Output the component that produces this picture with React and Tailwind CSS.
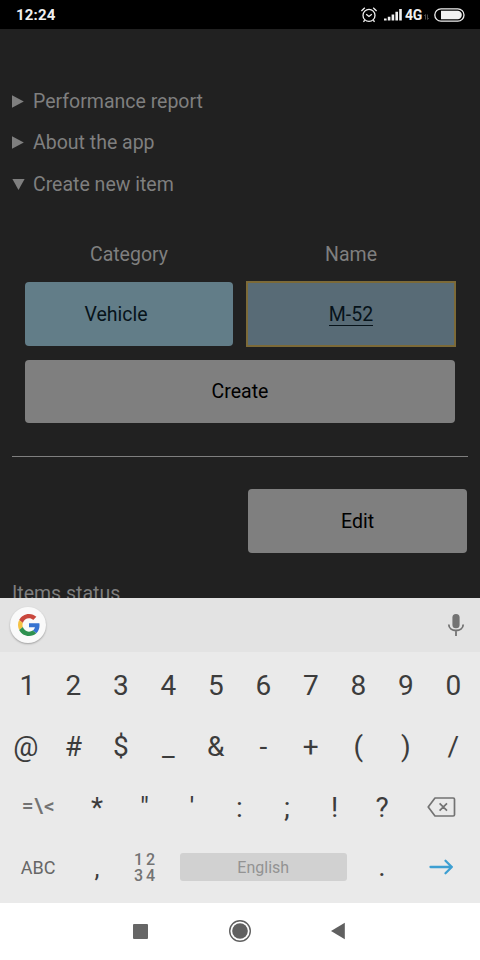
import React from "react";

const digits = ["1", "2", "3", "4", "5", "6", "7", "8", "9", "0"];
const symbols = ["@", "#", "$", "_", "&", "-", "+", "(", ")", "/"];
const punctuation = ["*", '"', "'", ":", ";", "!", "?"];

function StatusBar() {
  return (
    <header className="flex h-[29px] shrink-0 items-center justify-between bg-black pl-4 pr-[15px] text-[#f0f0f0]">
      <span className="pt-[2px] text-[15px] font-bold leading-none tracking-[0.2px]">12:24</span>
      <div className="flex items-center">
        <svg width="18" height="18" viewBox="0 0 18 18" fill="none" stroke="currentColor" strokeWidth="1.3" className="mr-[6px]">
          <circle cx="9" cy="9.4" r="6" />
          <path d="M1.4 5 4.8 1.8M16.6 5 13.2 1.8M4.8 14.2l-1.4 1.6M13.2 14.2l1.4 1.6M6.2 8.2 9 10.4l2.8-2.1" />
        </svg>
        <svg width="18" height="13" viewBox="0 0 18 13" fill="currentColor" className="mr-[3px]">
          <path d="M0 10.4h2.6v2.1H0zM3.8 8.8h2.6v3.7H3.8zM7.6 6.5h2.6v6H7.6zM11.4 3.8H14v8.7h-2.6zM15.2 1h2.6v11.5h-2.6z" />
        </svg>
        <span className="w-[19px] pt-px text-[14px] font-bold leading-none tracking-[-0.3px]">4G</span>
        <svg width="5" height="6" viewBox="0 0 5 6" fill="none" stroke="#4a4a4a" strokeWidth="1" className="mr-[5px] mt-1">
          <path d="M1.5 5.5v-5L.2 2M3.5.5v5L4.8 4" />
        </svg>
        <svg width="31" height="14" viewBox="0 0 31 14">
          <rect x=".8" y=".8" width="29.2" height="12.4" rx="6.2" fill="none" stroke="currentColor" strokeWidth="1.3" />
          <path d="M7 2.8h16.6a4.2 4.2 0 0 1 0 8.4H7z" fill="currentColor" />
        </svg>
      </div>
    </header>
  );
}

function Summary({ open, children }) {
  return (
    <div className="flex h-[41.5px] items-center">
      <svg width="13" height="14" viewBox="0 0 13 14" fill="#7f7f7f" className="mr-2">
        <path d={open ? "M.4 1h12.2L6.5 12z" : "M0 .2v12.6l11.8-6.3z"} />
      </svg>
      <span>{children}</span>
    </div>
  );
}

function Key({ children }) {
  return <div className="flex w-[47.5px] items-center justify-center text-[28px] leading-none">{children}</div>;
}

function Keyboard() {
  return (
    <section className="flex h-[305px] shrink-0 flex-col bg-[#eaeaea] text-[#3c3c3c]">
      <div className="flex h-[54px] items-center justify-between bg-[#e3e3e3] pb-px pl-[10px] pr-[15px]">
        <div className="flex size-9 items-center justify-center rounded-full bg-[#fafafa] pl-px shadow-[0_1px_2px_rgba(0,0,0,0.3)]">
          <svg width="22" height="22" viewBox="0 0 48 48">
            <path fill="#c9473d" d="M24 9.5c3.54 0 6.71 1.22 9.21 3.6l6.85-6.85C35.9 2.38 30.47 0 24 0 14.62 0 6.51 5.38 2.56 13.22l7.98 6.19C12.43 13.72 17.74 9.5 24 9.5z" />
            <path fill="#3673d1" d="M46.98 24.55c0-1.57-.15-3.09-.38-4.55H24v9.02h12.94c-.58 2.96-2.26 5.48-4.78 7.18l7.73 6c4.51-4.18 7.09-10.36 7.09-17.65z" />
            <path fill="#f5c243" d="M10.53 28.59c-.48-1.45-.76-2.99-.76-4.59s.27-3.14.76-4.59l-7.98-6.19C.92 16.46 0 20.12 0 24c0 3.88.92 7.54 2.56 10.78l7.97-6.19z" />
            <path fill="#2e9150" d="M24 48c6.48 0 11.93-2.13 15.89-5.81l-7.73-6c-2.15 1.45-4.92 2.3-8.16 2.3-6.26 0-11.57-4.22-13.47-9.91l-7.98 6.19C6.51 42.62 14.62 48 24 48z" />
          </svg>
        </div>
        <svg width="18" height="24" viewBox="0 0 18 24" fill="none" stroke="#737373" strokeWidth="1.8">
          <rect x="5.4" y="1" width="7.2" height="14.2" rx="3.5" fill="#737373" stroke="none" />
          <path d="M1.8 11.5c0 8 14.4 8 14.4 0M9 17.5V23" />
        </svg>
      </div>
      <div className="flex flex-col pl-[2px] pt-[3px]">
        <div className="flex h-[61px]">
          {digits.map((d) => <Key key={d}>{d === "1" ? <span className="pl-[3px]">1</span> : d}</Key>)}
        </div>
        <div className="flex h-[61px]">
          {symbols.map((s) => <Key key={s}>{s}</Key>)}
        </div>
        <div className="flex h-[60px]">
          <div className="flex w-[71.25px] items-center justify-center pl-[2px] text-[21px] font-medium tracking-[0.9px] text-[#737373]">=\&lt;</div>
          {punctuation.map((p) => <Key key={p}><span className="pt-[2px]">{p}</span></Key>)}
          <div className="flex w-[71.25px] items-center justify-center">
            <svg width="29" height="20" viewBox="0 0 29 20" fill="none" stroke="#737373" strokeWidth="1.7" strokeLinejoin="round">
              <path d="M8 1h18.2q1.3 0 1.3 1.3v15.4q0 1.3-1.3 1.3H8L1.2 10zM12.6 6.3l7.4 7.4M20 6.3l-7.4 7.4" />
            </svg>
          </div>
        </div>
        <div className="flex h-[60px]">
          <div className="flex w-[71.25px] items-center justify-center pl-px text-[18px] text-[#666]">ABC</div>
          <Key><span className="pt-[2px] text-[25px]">,</span></Key>
          <div className="flex w-[47.5px] flex-col items-center justify-center pt-[2px] text-[16px] font-medium leading-[16px] tracking-[3px] text-[#737373]">
            <span className="pl-[3px]">12</span>
            <span className="pl-[3px]">34</span>
          </div>
          <div className="flex w-[190px] items-center justify-center">
            <div className="flex h-7 w-[167px] items-center justify-center rounded-[3px] bg-[#d1d1d1] pt-[2px] text-[16px] text-[#939393]">English</div>
          </div>
          <Key>.</Key>
          <div className="flex w-[71.25px] items-center justify-center">
            <svg width="25" height="16" viewBox="0 0 25 16" fill="none" stroke="#3d9fd2" strokeWidth="2.3" strokeLinecap="round" strokeLinejoin="round">
              <path d="M1.5 8h21.3M16.5 1.8 22.8 8l-6.3 6.2" />
            </svg>
          </div>
        </div>
      </div>
    </section>
  );
}

function NavigationBar() {
  return (
    <nav className="flex h-[57px] shrink-0 items-center justify-between bg-white pb-px pl-[133px] pr-[134px] text-[#606060]">
      <div className="size-[15px] rounded-[1px] bg-[#666]" />
      <svg width="24" height="24" viewBox="0 0 24 24">
        <circle cx="12" cy="12" r="10.3" fill="none" stroke="currentColor" strokeWidth="1.4" />
        <circle cx="12" cy="12" r="7.8" fill="currentColor" />
      </svg>
      <svg width="15" height="18" viewBox="0 0 15 18" fill="currentColor">
        <path d="M13.8 .8v16.4L0 9z" />
      </svg>
    </nav>
  );
}

export default function App() {
  return (
    <div className="flex h-[960px] w-[480px] flex-col overflow-hidden bg-white font-['Roboto','Liberation_Sans',sans-serif]">
      <StatusBar />
      <main className="h-[569px] shrink-0 overflow-hidden bg-[#212121] px-3 pt-[52px] text-[19.5px] leading-6 text-[#7f7f7f]">
        <Summary>Performance report</Summary>
        <Summary>About the app</Summary>
        <Summary open>Create new item</Summary>
        <div className="mt-[37px] grid grid-cols-2 gap-x-[14px] px-[13px] text-center">
          <span>Category</span>
          <span>Name</span>
          <div className="mt-[15px] flex h-16 items-center justify-center rounded bg-[#627d88] pr-[26px] pt-[2px] text-[#07131a]">Vehicle</div>
          <div className="mt-[15px] flex h-16 items-center justify-center bg-[#586b76] pt-[2px] text-[#07131a] outline-2 -outline-offset-1 outline-[#7c6a38]">
            <span className="border-b border-[#07131a] pt-px leading-[21px]">M-52</span>
          </div>
          <div className="col-span-2 mt-[14px] flex h-[63px] items-center justify-center rounded bg-[#7f7f7f] pt-[2px] text-black">Create</div>
        </div>
        <hr className="mt-[33px] border-[#7f7f7f]" />
        <div className="mt-8 flex justify-end pr-px">
          <div className="flex h-16 w-[219px] items-center justify-center rounded bg-[#7f7f7f] pt-[2px] text-black">Edit</div>
        </div>
        <p className="mt-[29px]">Items status</p>
      </main>
      <Keyboard />
      <NavigationBar />
    </div>
  );
}
